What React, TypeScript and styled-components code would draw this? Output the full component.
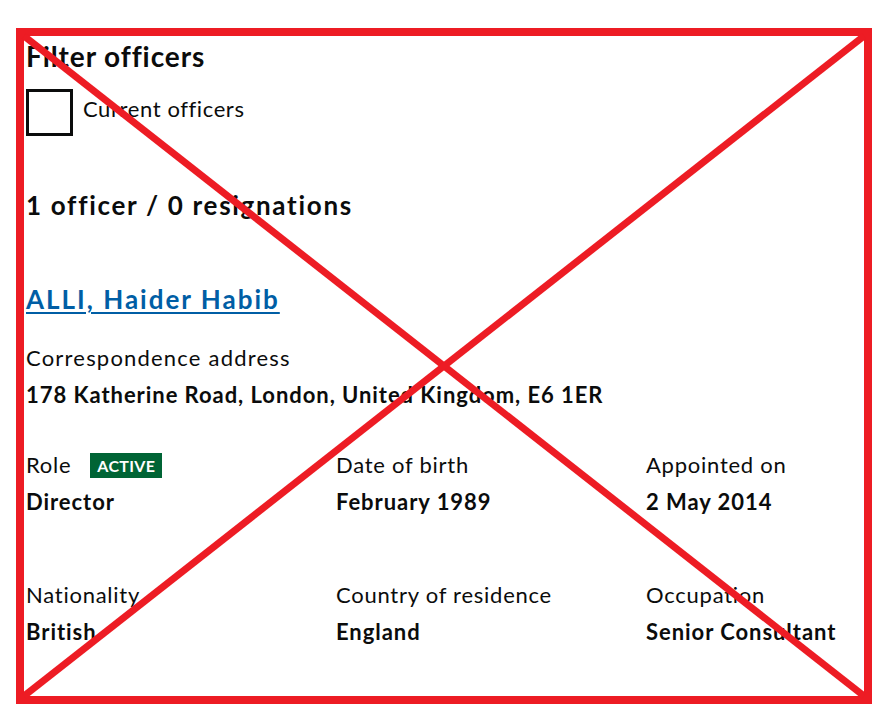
import React from 'react';
import styled, { createGlobalStyle } from 'styled-components';

const GlobalStyle = createGlobalStyle`
  html, body {
    margin: 0;
    padding: 0;
    background: #ffffff;
  }
  body {
    font-family: Lato, "Open Sans", Arial, sans-serif;
    color: #0b0c0c;
  }
`;

const Page = styled.div`
  position: relative;
  width: 894px;
  height: 722px;
  overflow: hidden;
  box-sizing: border-box;
  padding: 40px 0 0 26px;
`;

const Title = styled.h1`
  margin: 0;
  font-size: 28px;
  line-height: 1.2;
  font-weight: 700;
  letter-spacing: 0.9px;
`;

const FilterRow = styled.label`
  display: flex;
  align-items: flex-start;
  gap: 10px;
  margin-top: 15px;
`;

const CheckBox = styled.span`
  width: 47px;
  height: 47px;
  box-sizing: border-box;
  border: 3px solid #0b0c0c;
  background: #fff;
`;

const FilterLabel = styled.span`
  padding-top: 7px;
  font-size: 22px;
  line-height: 1.2;
  letter-spacing: 0.6px;
`;

const Count = styled.h2`
  margin: 54px 0 0;
  font-size: 26px;
  line-height: 1.2;
  font-weight: 700;
  letter-spacing: 1.7px;
`;

const OfficerName = styled.a`
  display: inline-block;
  margin-top: 63px;
  font-size: 26px;
  line-height: 1.2;
  font-weight: 700;
  letter-spacing: 2px;
  color: #005ea5;
  text-decoration: underline;
  text-decoration-thickness: 2px;
  text-underline-offset: 3px;
`;

const Label = styled.div<{ $spacing?: number }>`
  display: flex;
  align-items: center;
  gap: 19px;
  font-size: 22px;
  line-height: 1.2;
  min-height: 26.4px;
  letter-spacing: ${(p) => p.$spacing ?? 0.75}px;
`;

const Value = styled.div`
  margin-top: 10.6px;
  font-size: 22px;
  line-height: 1.2;
  font-weight: 700;
  letter-spacing: 0.95px;
`;

const Address = styled.div`
  margin-top: 30px;
`;

const Details = styled.div`
  display: grid;
  grid-template-columns: 310px 310px 1fr;
  row-gap: 67px;
  margin-top: 43.6px;
`;

const Tag = styled.span`
  display: inline-block;
  height: 25px;
  line-height: 26px;
  padding: 0 7px;
  background: #006435;
  color: #ffffff;
  font-size: 16px;
  font-weight: 700;
  text-transform: uppercase;
  letter-spacing: 0.3px;
`;

const Cross = styled.svg`
  position: absolute;
  left: 16px;
  top: 28px;
  pointer-events: none;
`;

const details: { label: string; value: string; tag?: string }[] = [
  { label: 'Role', value: 'Director', tag: 'Active' },
  { label: 'Date of birth', value: 'February 1989' },
  { label: 'Appointed on', value: '2 May 2014' },
  { label: 'Nationality', value: 'British' },
  { label: 'Country of residence', value: 'England' },
  { label: 'Occupation', value: 'Senior Consultant' },
];

export default function App() {
  return (
    <Page>
      <GlobalStyle />
      <Title>Filter officers</Title>
      <FilterRow>
        <CheckBox />
        <FilterLabel>Current officers</FilterLabel>
      </FilterRow>
      <Count>1 officer / 0 resignations</Count>
      <OfficerName href="#">ALLI, Haider Habib</OfficerName>
      <Address>
        <Label $spacing={1.2}>Correspondence address</Label>
        <Value>178 Katherine Road, London, United Kingdom, E6 1ER</Value>
      </Address>
      <Details>
        {details.map((d) => (
          <div key={d.label}>
            <Label>
              {d.label}
              {d.tag && <Tag>{d.tag}</Tag>}
            </Label>
            <Value>{d.value}</Value>
          </div>
        ))}
      </Details>
      <Cross width="856" height="676" viewBox="0 0 856 676">
        <rect x="4" y="4" width="848" height="668" fill="none" stroke="#ed1c24" strokeWidth="8" />
        <line x1="8" y1="8" x2="848" y2="668" stroke="#ed1c24" strokeWidth="7" />
        <line x1="848" y1="8" x2="8" y2="668" stroke="#ed1c24" strokeWidth="7" />
      </Cross>
    </Page>
  );
}
